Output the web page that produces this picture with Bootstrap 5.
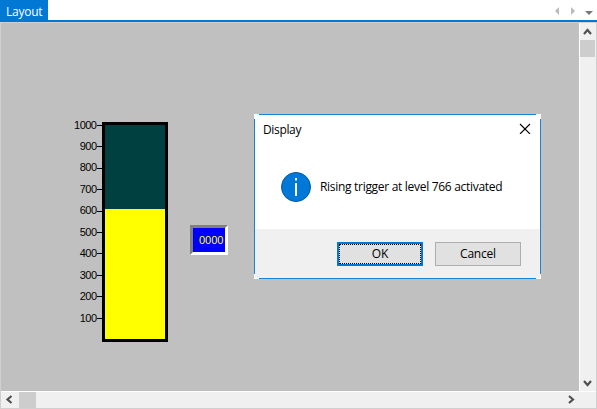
<!DOCTYPE html>
<html lang="en">
<head>
<meta charset="utf-8">
<title>Layout</title>
<link href="https://cdn.jsdelivr.net/npm/bootstrap@5.3.0/dist/css/bootstrap.min.css" rel="stylesheet">
<style>
html,body{height:409px;overflow:hidden}
body{font-family:"Open Sans","Noto Sans",sans-serif;font-size:12px;line-height:16px;color:#000;background:#fff}
svg{display:block}
.tabstrip{height:22px;border-bottom:2px solid #0078d4;flex:none}
.tab-active{width:48px;height:20px;background:#0078d4;color:#fff;padding:4px 0 0 6px;letter-spacing:-.25px}
.pane{border:1px solid #d0d0d0;min-height:0}
.surface{background:#c0c0c0}
.vbar{width:17px;background:#f0f0f0;border-left:1px solid #fff}
.hbar{height:17px;background:#f0f0f0;border-top:1px solid #fff;flex:none}
.vthumb{height:17px;background:#cdcdcd;width:15px}
.hthumb{width:17px;height:16px;background:#cdcdcd}
.arrow{width:16px;height:17px}
.gauge{left:70px;top:99px}
.scale{width:31px;font:11px/21.44px "Liberation Sans",Arial,sans-serif;letter-spacing:-.5px;margin-top:-7.4px}
.scale div{height:21.44px;display:flex;align-items:center;justify-content:flex-end}
.scale div::after{content:"";width:5px;height:1px;background:#000;margin-left:.5px}
.vessel{width:66px;height:220px;border:3px solid #000;background:#004040}
.fluid{background:#ff0;width:100%}
.digits{left:189px;top:202px;width:38px;height:30px;background:#00f;border:3px solid;border-color:#808080 #fff #fff #808080;color:#ff0;font:11px/25px "Liberation Sans",Arial,sans-serif;padding-left:6px}
.dlg{left:254px;top:114px;width:287px;height:165px;background:#fff;border:1px solid #1883d7}
.corner{width:5px;height:5px}
.c-tl{left:-1px;top:-1px;background:linear-gradient(#fff,#fff) 0 0/5px 1px no-repeat,linear-gradient(#fff,#fff) 0 0/1px 5px no-repeat}
.c-tr{right:-1px;top:-1px;background:linear-gradient(#fff,#fff) 0 0/5px 1px no-repeat,linear-gradient(#fff,#fff) 100% 0/1px 5px no-repeat}
.c-bl{left:-1px;bottom:-1px;background:linear-gradient(#fff,#fff) 0 100%/5px 1px no-repeat,linear-gradient(#fff,#fff) 0 0/1px 5px no-repeat}
.c-br{right:-1px;bottom:-1px;background:linear-gradient(#fff,#fff) 0 100%/5px 1px no-repeat,linear-gradient(#fff,#fff) 100% 0/1px 5px no-repeat}
.dlg-head{height:30px;padding:7px 9px 0 8px;letter-spacing:-.35px}
.dlg-body{height:84px;padding:27px 0 0 26px}
.msg{padding:7px 0 0 7px;letter-spacing:-.3px;white-space:nowrap}
.dlg-foot{height:49px;background:#f0f0f0;padding:13px 19px 0 0;gap:12px}
.dlg .btn{width:86px;height:24px;border-radius:0;background:#e1e1e1;border:1px solid #adadad;padding:0;font-size:12px;line-height:22px;letter-spacing:-.2px;color:#000}
.dlg .btn-ok{border:2px solid #0078d7;line-height:18px}
.btn-ok span{display:block;border:1px dotted #000;height:20px}
</style>
<script src="https://cdn.jsdelivr.net/npm/bootstrap@5.3.0/dist/js/bootstrap.bundle.min.js"></script>
</head>
<body class="d-flex flex-column">
<div class="tabstrip d-flex justify-content-between">
  <div class="tab-active">Layout</div>
  <svg width="44" height="20"><path d="M6 7v8L2 11zM18 7v8l4-4z" fill="#bbb"/><path d="M32 11h8l-4 4z" fill="#777"/></svg>
</div>
<main class="pane flex-fill d-flex flex-column">
  <div class="d-flex flex-fill">
    <section class="surface flex-fill position-relative">
      <div class="gauge position-absolute d-flex">
        <div class="scale"><div>1000</div><div>900</div><div>800</div><div>700</div><div>600</div><div>500</div><div>400</div><div>300</div><div>200</div><div>100</div></div>
        <div class="vessel d-flex align-items-end"><div class="fluid" style="height:60.75%"></div></div>
      </div>
      <div class="digits position-absolute">0000</div>
    </section>
    <div class="vbar d-flex flex-column justify-content-between">
      <div><svg class="arrow" viewBox="0 0 16 17"><path d="M4 11l3.500-4 3.500 4" fill="none" stroke="#505050" stroke-width="2.2"/></svg><div class="vthumb"></div></div>
      <svg class="arrow" viewBox="0 0 16 17"><path d="M4 7l3.500 4 3.500-4" fill="none" stroke="#505050" stroke-width="2.2"/></svg>
    </div>
  </div>
  <div class="hbar d-flex">
    <svg width="18" height="16"><path d="M10.500 4L6.500 7.500l4 3.500" fill="none" stroke="#505050" stroke-width="2.2"/></svg>
    <div class="hthumb"></div>
    <svg class="ms-auto" width="34" height="16"><path d="M7 4l4 3.500-4 3.500" fill="none" stroke="#505050" stroke-width="2.2"/></svg>
  </div>
</main>
<div class="dlg position-absolute">
  <i class="corner c-tl position-absolute"></i><i class="corner c-tr position-absolute"></i><i class="corner c-bl position-absolute"></i><i class="corner c-br position-absolute"></i>
  <div class="dlg-head d-flex justify-content-between"><span>Display</span>
    <svg width="12" height="12"><path d="M1 2l10 10M11 2L1 12" stroke="#000" stroke-width="1.1"/></svg></div>
  <div class="dlg-body d-flex"><svg width="32" height="32"><circle cx="15" cy="15" r="14.5" fill="#0078d7" stroke="#00599d"/><path d="M15 11v13M15 6v2.500" stroke="#fff" stroke-width="2"/></svg><span class="msg">Rising trigger at level 766 activated</span></div>
  <div class="dlg-foot d-flex justify-content-end"><button class="btn btn-ok"><span>OK</span></button><button class="btn">Cancel</button></div>
</div>
</body>
</html>
